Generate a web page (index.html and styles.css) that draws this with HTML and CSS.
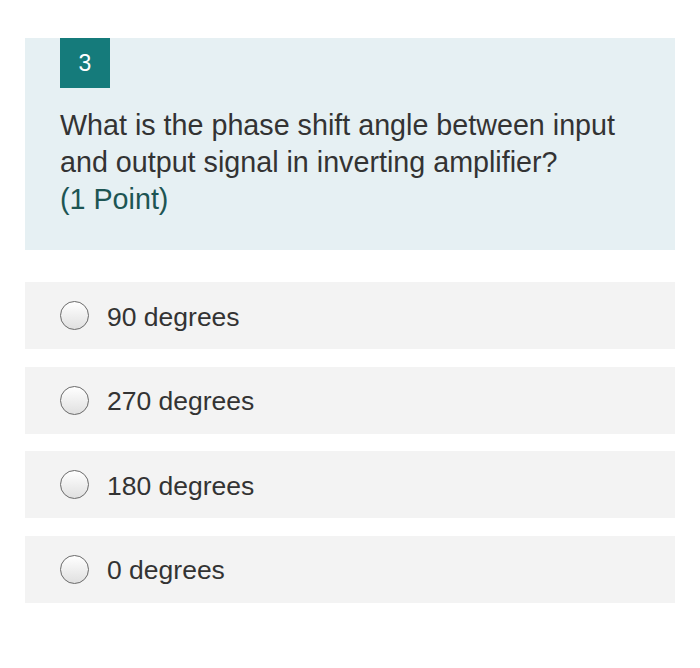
FILE: index.html
```html
<!DOCTYPE html>
<html>
<head>
<meta charset="utf-8">
<link rel="stylesheet" href="styles.css">
</head>
<body>
<div class="page">
  <div class="question">
    <div class="badge">3</div>
    <div class="qtext">What is the phase shift angle between input and output signal in inverting amplifier?</div>
    <div class="points">(1 Point)</div>
  </div>
  <div class="options">
    <div class="option"><span class="radio"></span><span class="label">90 degrees</span></div>
    <div class="option"><span class="radio"></span><span class="label">270 degrees</span></div>
    <div class="option"><span class="radio"></span><span class="label">180 degrees</span></div>
    <div class="option"><span class="radio"></span><span class="label">0 degrees</span></div>
  </div>
</div>
</body>
</html>
```
FILE: styles.css
```css
html, body {
  margin: 0;
  padding: 0;
  background: #ffffff;
}
body {
  font-family: "Liberation Sans", Arial, sans-serif;
  color: #333333;
}
.page {
  padding: 38px 25px 0 25px;
}
.question {
  background: #e6f0f3;
  padding: 0 15px 36px 35px;
  height: 212px;
  box-sizing: border-box;
}
.badge {
  width: 50px;
  height: 50px;
  background: #157b7b;
  color: #ffffff;
  font-size: 23px;
  display: flex;
  align-items: center;
  justify-content: center;
}
.qtext {
  margin-top: 19px;
  font-size: 28.7px;
  line-height: 37px;
  color: #333333;
  max-width: 600px;
}
.points {
  font-size: 28.7px;
  line-height: 37px;
  color: #1d5553;
}
.options {
  margin-top: 32px;
  display: flex;
  flex-direction: column;
  gap: 17.5px;
}
.option {
  background: #f3f3f3;
  height: 67px;
  display: flex;
  align-items: center;
  padding-left: 35px;
}
.radio {
  width: 29px;
  height: 29px;
  border: 1.5px solid #6a6a6a;
  border-radius: 50%;
  background: linear-gradient(#ffffff, #e0e0e0);
  box-sizing: border-box;
  flex: none;
}
.label {
  margin-left: 18px;
  padding-top: 3px;
  font-size: 26.5px;
  color: #333333;
}
```
